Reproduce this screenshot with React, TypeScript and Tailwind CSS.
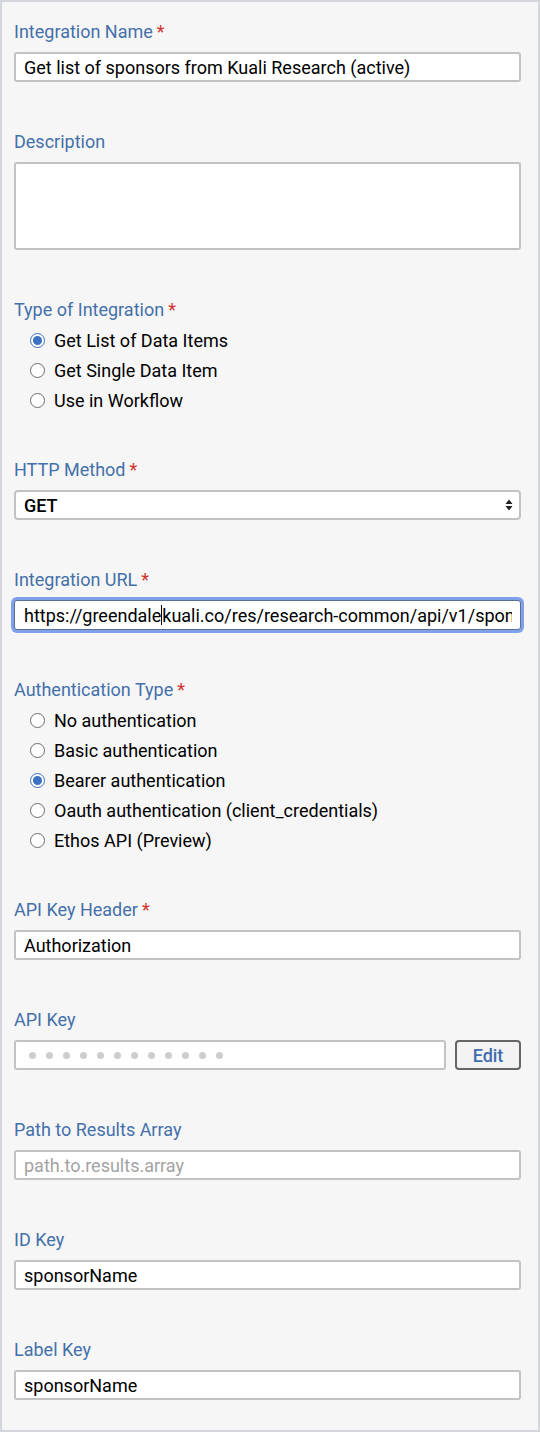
import React from "react";

const font = { fontFamily: "Roboto, 'Noto Sans', sans-serif" };

const Label = ({ text, required }: { text: string; required?: boolean }) => (
  <div className="h-5 leading-5 text-[18px] text-[#4470aa]">
    {text}
    {required && <span className="ml-1 text-[#d2322d]">*</span>}
  </div>
);

const TextBox = ({ value, placeholder }: { value?: string; placeholder?: string }) => (
  <div className="h-[30px] rounded-[3px] border-2 border-[#c2c2c2] bg-white pl-2 flex items-center text-[18px] whitespace-nowrap overflow-hidden">
    {value ? (
      <span className="text-black">{value}</span>
    ) : (
      <span className="text-[#a3a3a3]">{placeholder}</span>
    )}
  </div>
);

const Radio = ({ label, checked }: { label: string; checked?: boolean }) => (
  <div className="h-5 flex items-center pl-[16px] gap-[9px] text-[18px] text-black">
    {checked ? (
      <span className="w-[15px] h-[15px] rounded-full border-[1.5px] border-[#3b70c2] bg-white flex items-center justify-center">
        <span className="w-[9px] h-[9px] rounded-full bg-[#3b70c2]" />
      </span>
    ) : (
      <span className="w-[15px] h-[15px] rounded-full border-[1.5px] border-[#6b6b6b] bg-white" />
    )}
    <span>{label}</span>
  </div>
);

const Field = ({ children }: { children: React.ReactNode }) => (
  <div className="flex flex-col gap-[10px]">{children}</div>
);

export default function App() {
  return (
    <div
      style={font}
      className="w-[540px] h-[1432px] border-2 border-[#d3d7db] bg-[#f6f6f6] pl-3 pr-[17px] pt-5 flex flex-col gap-[50px]"
    >
      <Field>
        <Label text="Integration Name" required />
        <TextBox value="Get list of sponsors from Kuali Research (active)" />
      </Field>

      <Field>
        <Label text="Description" />
        <div className="h-[88px] rounded-[3px] border-2 border-[#c2c2c2] bg-white" />
      </Field>

      <Field>
        <Label text="Type of Integration" required />
        <Radio label="Get List of Data Items" checked />
        <Radio label="Get Single Data Item" />
        <Radio label="Use in Workflow" />
      </Field>

      <Field>
        <Label text="HTTP Method" required />
        <div className="h-[30px] rounded-[4px] border-2 border-[#c2c2c2] bg-white pl-2 pr-[6px] flex items-center justify-between text-[18px] font-medium text-black">
          <span>GET</span>
          <svg width="8" height="12" viewBox="0 0 8 12">
            <path d="M4 0.5 L7.5 5 H0.5 Z" fill="#222" />
            <path d="M4 11.5 L7.5 7 H0.5 Z" fill="#222" />
          </svg>
        </div>
      </Field>

      <Field>
        <Label text="Integration URL" required />
        <div className="h-[30px] rounded-[3px] border border-[#5a6e96] bg-white pl-[9px] pr-[8px] flex items-center shadow-[0_0_0_3px_#7fa1ea]">
          <div className="flex-1 flex items-center text-[18px] text-black whitespace-nowrap overflow-hidden">
            <span>https://greendale</span>
            <span className="w-px h-[20px] bg-black shrink-0" />
            <span>kuali.co/res/research-common/api/v1/sponsors</span>
          </div>
        </div>
      </Field>

      <Field>
        <Label text="Authentication Type" required />
        <Radio label="No authentication" />
        <Radio label="Basic authentication" />
        <Radio label="Bearer authentication" checked />
        <Radio label="Oauth authentication (client_credentials)" />
        <Radio label="Ethos API (Preview)" />
      </Field>

      <Field>
        <Label text="API Key Header" required />
        <TextBox value="Authorization" />
      </Field>

      <Field>
        <Label text="API Key" />
        <div className="flex items-center gap-[9px]">
          <div className="flex-1 h-[30px] rounded-[3px] border-2 border-[#c2c2c2] bg-white pl-[13px] flex items-center gap-[10px]">
            {Array.from({ length: 12 }).map((_, i) => (
              <span key={i} className="w-[7px] h-[7px] rounded-full bg-[#cdcdcd]" />
            ))}
          </div>
          <button className="w-[66px] h-[30px] rounded-[4px] border-2 border-[#666] bg-[#f3f3f3] text-[18px] font-medium text-[#3f6db0]">
            Edit
          </button>
        </div>
      </Field>

      <Field>
        <Label text="Path to Results Array" />
        <TextBox placeholder="path.to.results.array" />
      </Field>

      <Field>
        <Label text="ID Key" />
        <TextBox value="sponsorName" />
      </Field>

      <Field>
        <Label text="Label Key" />
        <TextBox value="sponsorName" />
      </Field>
    </div>
  );
}
